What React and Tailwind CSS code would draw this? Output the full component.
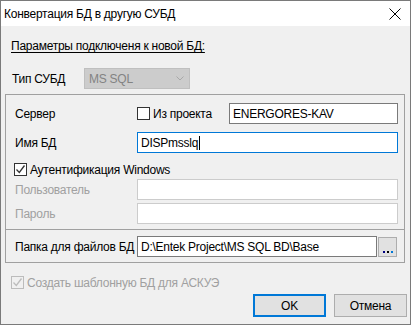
import React from "react";

const font = { fontFamily: '"Liberation Sans", Arial, sans-serif' };

function Check({ checked, disabled }) {
    return (
        <span
            className={`w-[13px] h-[13px] shrink-0 border flex items-center justify-center ${
                disabled ? "border-[#bcbcbc] bg-[#f0f0f0]" : "border-[#333333] bg-white"
            }`}
        >
            {checked && (
                <svg width="11" height="11" viewBox="0 0 11 11" fill="none">
                    <path
                        d="M1.5 5.5l2.8 3 5.2-7"
                        stroke={disabled ? "#bcbcbc" : "#333333"}
                        strokeWidth="1.3"
                    />
                </svg>
            )}
        </span>
    );
}

function Field({ children, className = "", border = "border-[#7a7a7a]" }) {
    return (
        <div className={`h-[21px] shrink-0 bg-white border ${border} flex items-center pl-[3px] text-black whitespace-nowrap ${className}`}>
            {children}
        </div>
    );
}

export default function App() {
    return (
        <div
            className="w-[411px] h-[325px] border border-[#7a7a7a] bg-[#f0f0f0] flex flex-col text-[12px] leading-4 tracking-[-0.25px] text-black"
            style={font}
        >
            {/* Title bar */}
            <div className="h-[25px] shrink-0 bg-white flex items-center pl-[3px] pr-[9px]">
                <span className="flex-1 text-[12px]">Конвертация БД в другую СУБД</span>
                <svg width="12" height="12" viewBox="0 0 12 12" className="mt-[1px]">
                    <path d="M0.5 0.5l11 11M11.5 0.5l-11 11" stroke="#000" strokeWidth="1" />
                </svg>
            </div>

            {/* Body */}
            <div className="flex flex-col">
                <div className="mt-[12px] pl-[10px] h-4">
                    <span className="underline underline-offset-2">Параметры подключеня к новой БД:</span>
                </div>

                <div className="mt-[14px] pl-[11px] flex items-center h-[21px]">
                    <span className="w-[72px] shrink-0">Тип СУБД</span>
                    <div className="w-[106px] h-[21px] bg-[#cccccc] border border-[#bfbfbf] flex items-center pl-[4px] pr-[5px] text-[#838383]">
                        <span className="flex-1">MS SQL</span>
                        <svg width="8" height="5" viewBox="0 0 8 5" fill="none">
                            <path d="M0.5 0.5l3.5 3.5 3.5-3.5" stroke="#a8a8a8" strokeWidth="1" />
                        </svg>
                    </div>
                </div>

                {/* Group box */}
                <div className="mt-[5px] ml-[4px] w-[400px] border border-[#a0a0a0] flex flex-col">
                    <div className="h-[134px] pl-[9px] pr-[6px] flex flex-col">
                        <div className="mt-[8px] h-[21px] flex items-center">
                            <span className="w-[122px] shrink-0">Сервер</span>
                            <Check />
                            <span className="ml-[3px] w-[76px] shrink-0 whitespace-nowrap">Из проекта</span>
                            <Field className="w-[169px]">ENERGORES-KAV</Field>
                        </div>
                        <div className="mt-[8px] h-[21px] flex items-center">
                            <span className="w-[122px] shrink-0">Имя БД</span>
                            <Field className="w-[261px]" border="border-[#0078d7]">
                                DISPmsslq
                                <span className="w-[1px] h-[14px] bg-black ml-[1px]" />
                            </Field>
                        </div>
                        <div className="mt-[10px] h-[13px] flex items-center">
                            <span className="-ml-[1px] flex items-center">
                                <Check checked />
                                <span className="ml-[3px] whitespace-nowrap">Аутентификация Windows</span>
                            </span>
                        </div>
                        <div className="mt-[3px] h-[21px] flex items-center">
                            <span className="w-[122px] shrink-0 text-[#a0a0a0]">Пользователь</span>
                            <Field className="w-[261px]" border="border-[#cccccc]" />
                        </div>
                        <div className="mt-[3px] h-[21px] flex items-center">
                            <span className="w-[122px] shrink-0 text-[#a0a0a0]">Пароль</span>
                            <Field className="w-[261px]" border="border-[#cccccc]" />
                        </div>
                    </div>
                    <div className="border-t border-[#a0a0a0] h-[33px] pl-[9px] flex items-start">
                        <div className="mt-[6px] h-[21px] flex items-center">
                            <span className="w-[122px] shrink-0 whitespace-nowrap">Папка для файлов БД</span>
                            <Field className="w-[240px]">D:\Entek Project\MS SQL BD\Base</Field>
                            <div className="ml-[1px] mt-[1px] w-[19px] h-[20px] shrink-0 bg-[#e1e1e1] border border-[#adadad] flex items-end justify-center pb-[3px]">
                                <span className="flex gap-[2px]">
                                    <span className="w-[2px] h-[2px] bg-[#000080]" />
                                    <span className="w-[2px] h-[2px] bg-black" />
                                    <span className="w-[2px] h-[2px] bg-[#0078d7]" />
                                </span>
                            </div>
                        </div>
                    </div>
                </div>

                <div className="mt-[13px] pl-[10px] h-[13px] flex items-center text-[#a0a0a0]">
                    <Check checked disabled />
                    <span className="ml-[3px] whitespace-nowrap">Создать шаблонную БД для АСКУЭ</span>
                </div>

                <div className="mt-[5px] flex justify-end gap-[8px] pr-[3px]">
                    <button className="w-[73px] h-[23px] bg-[#e1e1e1] border-2 border-[#0078d7] flex items-center justify-center">
                        OK
                    </button>
                    <button className="w-[73px] h-[23px] bg-[#e1e1e1] border border-[#adadad] flex items-center justify-center">
                        Отмена
                    </button>
                </div>
            </div>
        </div>
    );
}
